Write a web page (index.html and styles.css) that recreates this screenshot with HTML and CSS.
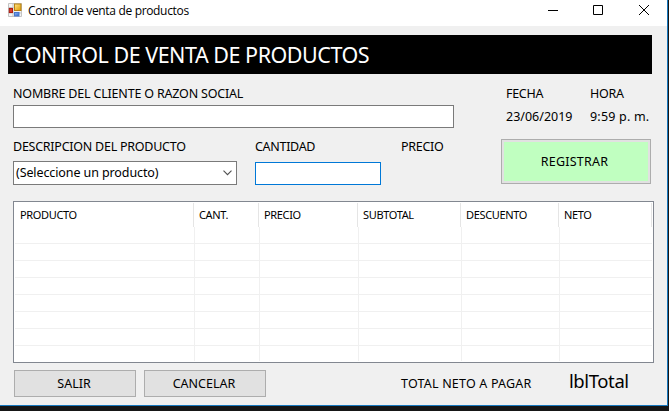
FILE: index.html
```html
<!DOCTYPE html>
<html lang="es">
<head>
<meta charset="utf-8">
<title>Control de venta de productos</title>
<link rel="stylesheet" href="styles.css">
</head>
<body>
<main class="window">
  <header class="titlebar">
    <svg class="app-icon" width="14" height="14" viewBox="0 0 14 14">
      <defs>
        <linearGradient id="gold" x2="1" y2="1"><stop stop-color="#ffe58a"/><stop offset="1" stop-color="#dc9a00"/></linearGradient>
        <linearGradient id="blue" x2="1" y2="1"><stop stop-color="#8db8f5"/><stop offset="1" stop-color="#2f62c8"/></linearGradient>
      </defs>
      <path d="M.5 .5h13v13H.5zM5 .5v13M.5 4.500h5M.5 10h13" fill="#f4f4f4" stroke="#c3c3c3"/>
      <rect x="6.500" y="1" width="6.500" height="6.500" fill="url(#gold)" stroke="#b98212"/>
      <rect x="1.300" y="5.500" width="3.200" height="4" fill="#dd3a28" stroke="#ad1d13"/>
      <rect x="6.500" y="9.500" width="4.500" height="3.500" fill="url(#blue)" stroke="#4a78cc"/>
    </svg>
    <span class="caption">Control de venta de productos</span>
    <svg class="controls" width="102" height="12" viewBox="0 0 102 12" fill="none" stroke="#000">
      <path d="M0 6.500h10M45.500 1.500h9v9h-9z"/>
      <path d="M91 1l10 10M101 1L91 11"/>
    </svg>
  </header>
  <h1 class="banner">CONTROL DE VENTA DE PRODUCTOS</h1>
  <section class="client">
    <div class="field">
      <label class="client-label" for="client">NOMBRE DEL CLIENTE O RAZON SOCIAL</label>
      <input id="client" class="box" type="text">
    </div>
    <div class="stamp"><span>FECHA</span><span class="date">23/06/2019</span></div>
    <div class="stamp"><span>HORA</span><span class="time">9:59 p. m.</span></div>
  </section>
  <section class="product">
    <div class="field">
      <span class="product-label">DESCRIPCION DEL PRODUCTO</span>
      <div class="combo"><span>(Seleccione un producto)</span>
        <svg width="9" height="6" viewBox="0 0 9 6" fill="none" stroke="#505050" stroke-width="1.100"><path d="M.5 .7l4 4 4-4"/></svg>
      </div>
    </div>
    <div class="field quantity">
      <label for="qty">CANTIDAD</label>
      <input id="qty" class="box focused" type="text">
    </div>
    <div class="field"><span>PRECIO</span></div>
    <button class="register">REGISTRAR</button>
  </section>
  <section class="list">
    <div class="list-head">
      <span>PRODUCTO</span><span>CANT.</span><span>PRECIO</span><span>SUBTOTAL</span><span>DESCUENTO</span><span>NETO</span>
    </div>
    <div class="list-body">
      <i></i><i></i><i></i><i></i><i></i><i></i>
    </div>
  </section>
  <footer class="actions">
    <button class="btn">SALIR</button>
    <button class="btn">CANCELAR</button>
    <span class="total-label">TOTAL NETO A PAGAR</span>
    <span class="total">lblTotal</span>
  </footer>
</main>
</body>
</html>
```
FILE: styles.css
```css
* { box-sizing: border-box; }
body {
  margin: 0;
  width: 669px;
  height: 411px;
  overflow: hidden;
  background: #161616;
  color: #000;
  font: 12.5px/16px "Noto Sans", "Open Sans", sans-serif;
  letter-spacing: -0.3px;
  white-space: nowrap;
}
.window {
  width: 668px;
  height: 406px;
  background: #f0f0f0;
  border: solid #1878be;
  border-width: 0 1px 1px 0;
}
.titlebar {
  height: 26px;
  padding: 3px 0 0 8px;
  background: #fff;
  display: flex;
}
.caption { margin-left: 6px; font: 12px/16px "Open Sans", sans-serif; letter-spacing: -0.33px; }
.controls { margin: 1px 17px 0 auto; }
.banner {
  width: 644px;
  height: 39px;
  margin: 9px 0 0 8px;
  padding-left: 4px;
  background: #000;
  color: #fff;
  font-size: 21.5px;
  font-weight: 400;
  line-height: 40px;
  letter-spacing: -0.48px;
}
.client {
  display: grid;
  grid-template-columns: 493px 84px 1fr;
  height: 54px;
  padding: 12px 0 0 13px;
}
.client-label { letter-spacing: -0.19px; }
.product-label { letter-spacing: -0.25px; }
.date { letter-spacing: 0; }
.time { letter-spacing: 0.2px; }
.field { display: flex; flex-direction: column; align-items: flex-start; }
.box {
  width: 441px;
  height: 23px;
  margin: 3px 0 0;
  border: 1px solid #7a7a7a;
  background: #fff;
  outline: 0;
}
.stamp { display: flex; flex-direction: column; gap: 7px; }
.product {
  display: grid;
  grid-template-columns: 242px 146px 100px 150px;
  height: 73px;
  padding: 11px 0 0 13px;
}
.combo {
  width: 224px;
  height: 24px;
  margin-top: 6px;
  padding: 0 4px 0 2px;
  display: flex;
  align-items: center;
  justify-content: space-between;
  border: 1px solid #7a7a7a;
  background: #fff;
  letter-spacing: -0.1px;
}
.quantity .box { width: 126px; margin-top: 7px; }
.box.focused { border-color: #0078d7; }
button { font: inherit; color: inherit; letter-spacing: inherit; padding: 0; }
.register {
  height: 45px;
  padding-right: 3px;
  background: #c0ffc0;
  border: 1px solid #adadad;
  box-shadow: inset 0 0 0 2px #e1e1e1;
  letter-spacing: 0.25px;
}
.list {
  width: 641px;
  height: 162px;
  margin-left: 13px;
  border: 1px solid #828790;
  background: #fff;
  padding: 1px;
}
.list-head, .list-body { display: grid; }
.list-head {
  grid-template-columns: 179px 65px 99px 103px 98px 93px;
  height: 24px;
  font-size: 11px;
  line-height: 24px;
  letter-spacing: -0.35px;
}
.list-head span { border-right: 1px solid #e5e5e5; padding-left: 5px; }
.list-body {
  grid-template-columns: 180px 65px 99px 103px 98px 1fr;
  height: 134px;
  background: repeating-linear-gradient(transparent 0 16px, #f0f0f0 16px 17px);
}
.list-body i:not(:last-child) { border-right: 1px solid #f0f0f0; }
.actions { display: flex; padding: 7px 0 0 14px; }
.btn {
  width: 122px;
  height: 27px;
  margin-right: 8px;
  padding-right: 2px;
  background: #e1e1e1;
  border: 1px solid #adadad;
  letter-spacing: 0;
}
.total-label { width: 168px; margin: 6px 0 0 127px; letter-spacing: 0.2px; }
.total { font-size: 18.5px; line-height: 22px; letter-spacing: -0.4px; }
```
